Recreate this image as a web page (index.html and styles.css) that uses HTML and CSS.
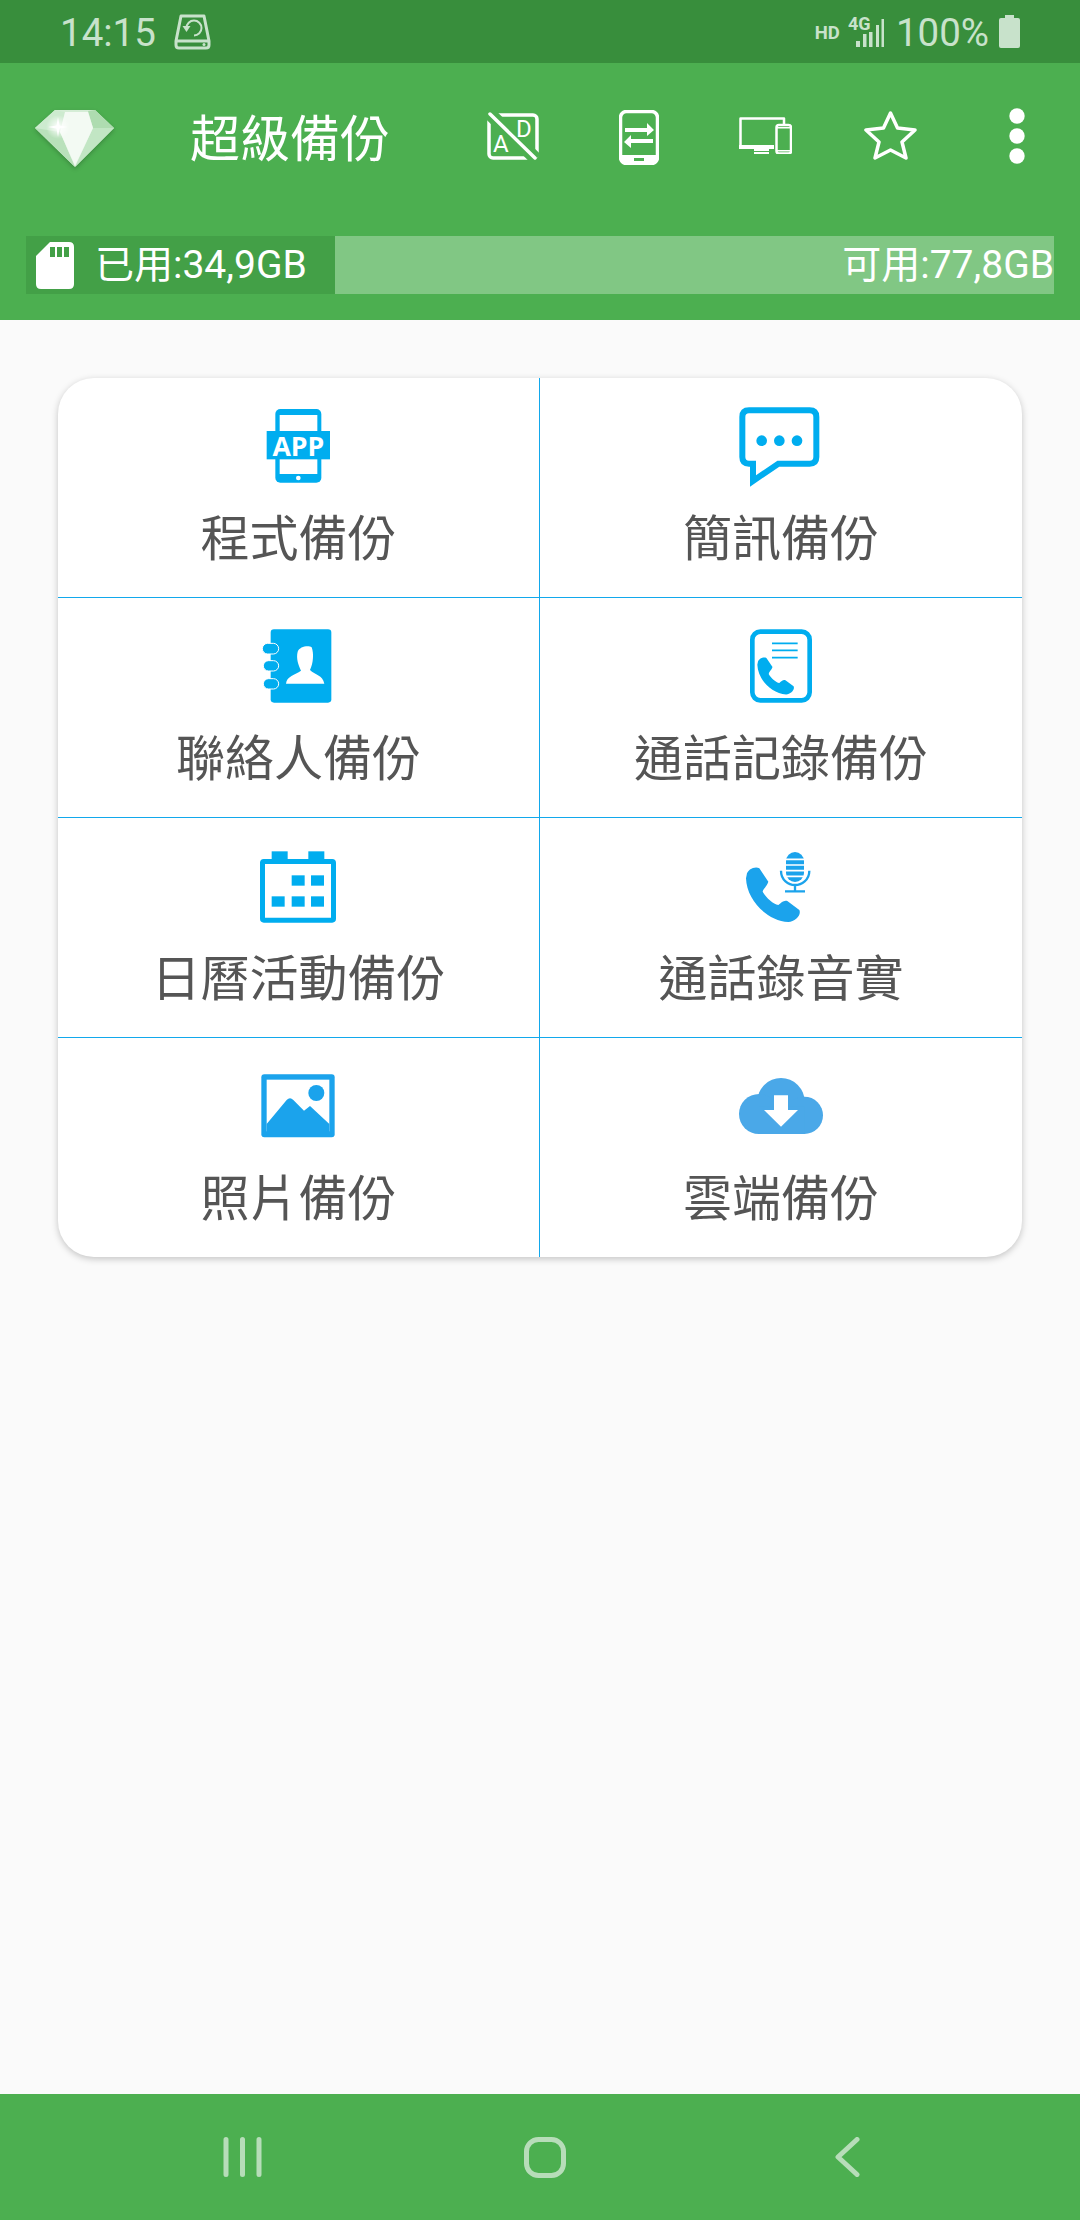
FILE: index.html
```html
<!DOCTYPE html>
<html lang="zh-Hant">
<head>
<meta charset="utf-8">
<title>超級備份</title>
<link rel="stylesheet" href="styles.css">
</head>
<body>
<div class="app">
  <div class="status">
    <span class="time">14:15</span>
    <svg class="hdd" viewBox="0 0 37 36"><path class="st" d="M7 2 H30 L35 27 V31 Q35 34 32 34 H5 Q2 34 2 31 V27 Z M2 27 H35"/><path class="st thin" d="M12.500 14 A7.500 7.500 0 1 1 20 21.500"/><path class="sf" d="M8.500 12 L16.500 12 L12.500 18 Z"/><circle class="sf" cx="30" cy="30.500" r="1.500"/></svg>
    <span class="spacer"></span>
    <span class="hd">HD</span>
    <svg class="signal" viewBox="0 -4 36 38"><text class="g4" x="0" y="14">4G</text><rect class="sf" x="8" y="25" width="4" height="6"/><rect class="sf" x="15" y="18" width="3.500" height="13"/><rect class="sf" x="21" y="16" width="3.500" height="15"/><rect class="sf" x="28" y="9" width="3" height="22"/><rect class="sf" x="33.500" y="3" width="2.500" height="28"/></svg>
    <span class="pct">100%</span>
    <svg class="batt" viewBox="0 0 21 33"><path class="sf" d="M6 0 H15 V3 H19 Q21 3 21 5 V31 Q21 33 19 33 H2 Q0 33 0 31 V5 Q0 3 2 3 H6 Z"/></svg>
  </div>

  <header class="head">
    <div class="bar">
      <svg class="gem" viewBox="0 0 80 60">
        <defs><radialGradient id="glint"><stop offset="0" stop-color="#fff"/><stop offset="1" stop-color="#fff" stop-opacity="0"/></radialGradient></defs>
        <path fill="#D5EDD6" d="M20 1 H60 L79 19 L40 58 L0 19 Z"/>
        <path fill="#CDEBCF" d="M20 1 L30 3 L25 23 L0 19 Z"/>
        <path fill="#B9E1BB" d="M0 19 L25 23 L40 58 Z"/>
        <path fill="#AEDCB0" d="M53 2 L60 1 L79 19 H58 Z"/>
        <path fill="#C2E6C4" d="M58 19 H79 L40 58 Z"/>
        <path fill="#F3FAF3" d="M30 3 H53 L58 19 L40 57 L25 23 Z"/>
        <circle fill="url(#glint)" cx="23" cy="18" r="12"/>
        <path fill="#FFFFFF" d="M23 8 L24.500 16.500 L33 18 L24.500 19.500 L23 28 L21.500 19.500 L13 18 L21.500 16.500 Z"/>
      </svg>
      <h1 class="title">超級備份</h1>
      <div class="actions">
        <span class="act"><svg class="i-ad" viewBox="0 0 52 48"><rect class="w" x="2" y="3" width="48" height="43" rx="4"/><path class="halo" d="M2 1 L49 47"/><text class="adt" x="6" y="40">A</text><text class="adt" x="29" y="25">D</text><path class="w" d="M3 2 L48 46"/></svg></span>
        <span class="act"><svg class="i-tr" viewBox="0 0 40 55"><rect class="w" x="1.500" y="1.500" width="37" height="52" rx="6"/><path class="wf" d="M1.500 45 H38.500 V47 Q38.500 55 32 55 H8 Q1.500 55 1.500 47 Z"/><rect class="gf" x="15" y="48" width="10" height="3"/><path class="wf" d="M6 18 H28 V13 L35 20 L28 26 V22 H6 Z M34 29 H12 V25 L5 32 L12 38 V33 H34 Z"/></svg></span>
        <span class="act"><svg class="i-dv" viewBox="0 0 53 37"><path class="w2" d="M45 7 V1.500 H1.500 V30 H35"/><rect class="wf" x="0" y="28" width="35" height="4"/><rect class="wf" x="15" y="32" width="15" height="2"/><rect class="wf" x="15" y="35" width="15" height="2"/><rect class="w2" x="37.500" y="8" width="14.500" height="28.500" rx="2.500"/><rect class="wf" x="37.500" y="10" width="14" height="1.500"/><rect class="wf" x="37.500" y="33" width="14" height="1.500"/></svg></span>
        <span class="act"><svg class="i-st" viewBox="0 0 54 52"><path class="w" d="M26.500 3 L33.500 18 L51 20 L38 32 L42 48 L26.500 40 L11 48 L15 32 L2 20 L19.500 18 Z"/></svg></span>
        <span class="act"><svg class="i-mo" viewBox="0 0 16 56"><circle class="wf" cx="8" cy="8" r="7.700"/><circle class="wf" cx="8" cy="28" r="7.700"/><circle class="wf" cx="8" cy="48" r="7.700"/></svg></span>
      </div>
    </div>
    <div class="storage">
      <div class="used">
        <svg class="sd" viewBox="0 0 38 47"><path class="wf" d="M14 0 H33 Q38 0 38 5 V42 Q38 47 33 47 H5 Q0 47 0 42 V14 Z"/><rect class="uf" x="14" y="5" width="5" height="10"/><rect class="uf" x="21" y="5" width="5" height="10"/><rect class="uf" x="28" y="5" width="5" height="10"/></svg>
        <span>已用:34,9GB</span>
      </div>
      <span class="free">可用:77,8GB</span>
    </div>
  </header>

  <main class="content">
    <section class="card">
      <div class="cell">
        <svg class="ico" viewBox="81 75 252 252"><rect class="b" x="136" y="87" width="138" height="221" rx="15"/><rect class="wh" x="149" y="105" width="113" height="177"/><rect class="b" x="110" y="153" width="190" height="85"/><text class="apptxt" x="205" y="228">APP</text><circle class="wh" cx="205" cy="294" r="7"/></svg>
        <span class="label">程式備份</span>
      </div>
      <div class="cell">
        <svg class="ico" viewBox="117 75 252 252"><path class="bs" d="M147 91 H329 Q349 91 349 111 V231 Q349 251 329 251 H235 L159 303 V251 H147 Q127 251 127 231 V111 Q127 91 147 91 Z"/><circle class="b" cx="185" cy="182" r="16"/><circle class="b" cx="238" cy="182" r="16"/><circle class="b" cx="291" cy="182" r="16"/></svg>
        <span class="label">簡訊備份</span>
      </div>
      <div class="cell">
        <svg class="ico" viewBox="81 735 252 252"><rect class="b" x="122" y="748" width="182" height="220" rx="10"/><rect class="pill" x="97" y="790" width="49" height="32" rx="16"/><rect class="pill" x="100" y="842" width="46" height="31" rx="15.500"/><rect class="pill" x="100" y="896" width="46" height="31" rx="15.500"/><path class="wh" d="M168 911 C170 888 195 885 213 872 C205 855 198 835 203 815 C208 800 235 795 245 802 C252 820 250 850 240 870 C255 885 278 885 283 911 Z"/></svg>
        <span class="label">聯絡人備份</span>
      </div>
      <div class="cell">
        <svg class="ico" viewBox="117 735 252 252"><rect class="bs2" x="157" y="755" width="172" height="206" rx="24"/><path class="bl" d="M216 790 H293 M216 811 H293 M216 833 H293"/><path class="b" transform="translate(172 832) scale(.68) translate(-138 -112)" d="M140 135 C142 118 165 108 178 115 L205 155 C200 170 190 175 188 185 C200 205 220 222 235 225 C245 218 250 210 262 213 L298 240 C305 255 285 275 265 276 C200 272 140 210 138 145 Z"/></svg>
        <span class="label">通話記錄備份</span>
      </div>
      <div class="cell">
        <svg class="ico" viewBox="81 45 252 252"><rect class="bs3" x="97.500" y="94.500" width="213" height="176" rx="4"/><rect class="b" x="125" y="64" width="48" height="28"/><rect class="b" x="235" y="64" width="48" height="28"/><rect class="b" x="185" y="136" width="39" height="31"/><rect class="b" x="243" y="136" width="39" height="31"/><rect class="b" x="125" y="199" width="39" height="31"/><rect class="b" x="185" y="199" width="39" height="31"/><rect class="b" x="243" y="199" width="39" height="31"/></svg>
        <span class="label">日曆活動備份</span>
      </div>
      <div class="cell">
        <svg class="ico" viewBox="117 45 252 252"><path class="b2" d="M140 135 C142 118 165 108 178 115 L205 155 C200 170 190 175 188 185 C200 205 220 222 235 225 C245 218 250 210 262 213 L298 240 C305 255 285 275 265 276 C200 272 140 210 138 145 Z"/><rect class="b2" x="258" y="66" width="54" height="90" rx="27"/><path class="wl" d="M258 88 H312 M258 105 H312 M258 122 H312 M258 139 H312"/><path class="bm" d="M243 122 C243 150 265 165 285 165 C305 165 328 150 328 122 M285 165 V185 M255 184 H315"/></svg>
        <span class="label">通話錄音實</span>
      </div>
      <div class="cell">
        <svg class="ico" viewBox="81 705 252 252"><rect class="b2" x="94" y="733" width="220" height="189" rx="9"/><rect class="wh" x="110" y="749" width="188" height="155"/><path class="b2" d="M110 882 L170 810 Q180 800 190 810 L222 842 L240 828 L298 882 V906 H110 Z"/><circle class="b2" cx="259" cy="789" r="24"/></svg>
        <span class="label">照片備份</span>
      </div>
      <div class="cell">
        <svg class="ico" viewBox="117 705 252 252"><g class="cl"><circle cx="243" cy="815" r="71"/><circle cx="177" cy="852" r="60"/><circle cx="313" cy="856" r="56"/><rect x="177" y="830" width="136" height="82"/></g><path class="wh" d="M222 796 H264 V840 H294 L243 890 L192 840 H222 Z"/></svg>
        <span class="label">雲端備份</span>
      </div>
    </section>
  </main>

  <nav class="nav">
    <svg class="n-rec" viewBox="0 0 40 40"><path class="ns" d="M3 2.500 V37.500 M19.500 2.500 V37.500 M36 2.500 V37.500"/></svg>
    <svg class="n-home" viewBox="0 0 42 41"><rect class="ns" x="2.500" y="2.500" width="37" height="36" rx="12"/></svg>
    <svg class="n-back" viewBox="0 0 25 40"><path class="ns" d="M22 2.500 L3 20 L22 37.500" /></svg>
  </nav>
</div>
</body>
</html>
```

FILE: styles.css
```css
* { box-sizing: border-box; }
html, body { margin: 0; padding: 0; }
body { background: #FAFAFA; font-family: Roboto, "Noto Sans CJK TC", sans-serif; }
.app { width: 1080px; height: 2220px; display: flex; flex-direction: column; overflow: hidden; }

/* status bar */
.status { height: 63px; background: #388E3C; color: #C8E2CB; display: flex; align-items: center; padding: 0 60px 0 60px; }
.time, .pct { font-size: 38.500px; line-height: 60px; margin-top: 3px; }
.hdd { width: 37px; height: 36px; margin-left: 18px; margin-top: 1px; }
.spacer { flex: 1; }
.hd { font-size: 18.500px; font-weight: 700; margin-right: 8px; margin-top: 2px; }
.signal { width: 36px; height: 38px; margin-right: 12px; margin-top: -2px; }
.g4 { font: 700 18px Roboto, sans-serif; fill: #C8E2CB; }
.batt { width: 21px; height: 33px; margin-left: 10px; }
.st { fill: none; stroke: #C8E2CB; stroke-width: 3; stroke-linejoin: round; }
.thin { stroke-width: 2; }
.sf { fill: #C8E2CB; }

/* header */
.head { background: #4CAF50; height: 257px; display: flex; flex-direction: column; }
.bar { height: 147px; display: flex; align-items: center; }
.gem { width: 80px; height: 60px; margin: 4px 0 0 35px; filter: drop-shadow(0 2px 2px rgba(0,0,0,.2)); }
.title { flex: 1; margin: -3px 0 0 75px; font: 400 50px/1.2 "Noto Sans CJK TC", sans-serif; color: #fff; }
.actions { display: flex; margin-top: -2px; }
.act { width: 126px; display: flex; justify-content: center; align-items: center; }
.i-ad { width: 52px; height: 48px; margin-top: 1px; }
.i-tr { width: 40px; height: 55px; margin-top: 4px; }
.i-dv { width: 53px; height: 37px; }
.i-st { width: 54px; height: 52px; }
.i-mo { width: 16px; height: 56px; }
.w, .w2 { fill: none; stroke: #fff; stroke-width: 3.500; stroke-linejoin: round; stroke-linecap: round; }
.w2 { stroke-width: 2.500; stroke-linecap: butt; }
.wf { fill: #fff; }
.gf { fill: #4CAF50; }
.uf { fill: #43A047; }
.halo { stroke: #4CAF50; stroke-width: 13; fill: none; }
.adt { font: 400 24px Roboto, sans-serif; fill: #fff; }

.storage { margin: 26px 26px 0; height: 58px; background: #81C784; display: flex; justify-content: space-between; align-items: center; color: #fff; font-size: 39px; line-height: 58px; }
.used { width: 309px; height: 58px; background: #43A047; display: flex; align-items: center; padding-left: 10px; gap: 21px; }
.sd { width: 38px; height: 47px; flex: none; }

/* grid card */
.content { flex: 1; padding: 58px 58px 0; }
.card { width: 964px; height: 879px; background: #fff; border-radius: 36px; box-shadow: 0 2px 7px rgba(0,0,0,.22); display: grid; grid-template-columns: 1fr 1fr; grid-template-rows: 220px 220px 220px 219px; }
.cell { display: flex; flex-direction: column; align-items: center; padding-top: 27px; border-bottom: 1px solid #12A8EC; }
.cell:nth-child(odd) { border-right: 1px solid #12A8EC; }
.cell:nth-last-child(-n+2) { border-bottom: 0; }
.ico { width: 84px; height: 84px; flex: none; }
.label { margin-top: 16px; height: 60px; font: 400 49px/60px "Noto Sans CJK TC", sans-serif; color: #555; white-space: nowrap; }
.b { fill: #00ADEF; }
.b2 { fill: #1BA3EC; }
.wh { fill: #fff; }
.cl { fill: #4AA8E8; }
.bs { fill: none; stroke: #00ADEF; stroke-width: 18; }
.bs2 { fill: none; stroke: #00ADEF; stroke-width: 14; }
.bs3 { fill: none; stroke: #00ADEF; stroke-width: 15; }
.bl { fill: none; stroke: #00ADEF; stroke-width: 5; }
.pill { fill: #00ADEF; stroke: #fff; stroke-width: 3; }
.apptxt { font: 700 80px "Open Sans", sans-serif; fill: #fff; text-anchor: middle; }
.wl { fill: none; stroke: #fff; stroke-width: 5; }
.bm { fill: none; stroke: #1BA3EC; stroke-width: 7; }

/* nav */
.nav { height: 126px; background: #4CAF50; display: grid; grid-template-columns: 302px 302px 302px; padding-left: 92px; align-items: center; justify-items: center; }
.n-rec { width: 40px; height: 40px; }
.n-home { width: 42px; height: 41px; }
.n-back { width: 25px; height: 40px; }
.ns { fill: none; stroke: #B7DDB9; stroke-width: 5; stroke-linecap: round; stroke-linejoin: round; }
```
